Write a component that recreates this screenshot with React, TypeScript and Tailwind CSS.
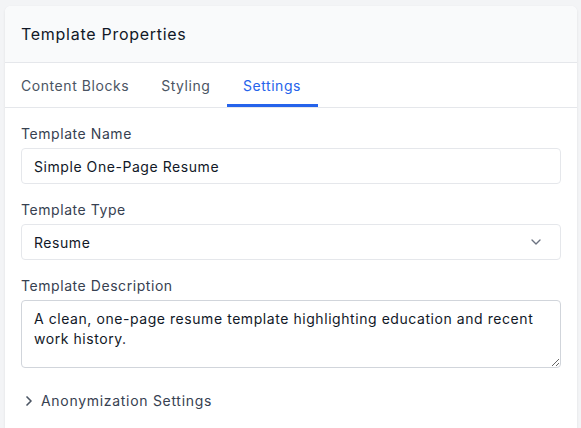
import React from "react";

export default function App() {
  const font = { fontFamily: "Inter, 'Noto Sans', sans-serif" };
  return (
    <div className="min-h-[428px] w-[581px] bg-[#f3f4f6] pt-[6px] pl-[5px]" style={font}>
      <div className="w-[572px] h-[422px] rounded-t-md bg-white shadow-[0_1px_3px_rgba(0,0,0,0.08)] overflow-hidden">
        <div className="bg-[#f9fafb] border-b border-[#e5e7eb] px-4 h-[57px] flex items-center">
          <h2 className="text-[16px] font-normal text-[#111827] tracking-[0.045em]">Template Properties</h2>
        </div>
        <div className="flex border-b border-[#e5e7eb] h-[45px]">
          <button className="px-4 text-[14px] text-[#4b5563] tracking-[0.04em] border-b-[3px] border-transparent pt-[3px]">Content Blocks</button>
          <button className="px-4 text-[14px] text-[#4b5563] tracking-[0.04em] border-b-[3px] border-transparent pt-[3px]">Styling</button>
          <button className="px-4 text-[14px] text-[#2563eb] tracking-[0.04em] border-b-[3px] border-[#2563eb] pt-[3px] w-[91px]">Settings</button>
        </div>
        <div className="px-4 pt-4">
          <div className="mb-4">
            <label className="block text-[14px] leading-5 text-[#374151] mb-1 tracking-[0.04em]">Template Name</label>
            <input
              className="w-full h-9 px-3 border border-[#e5e7eb] rounded text-[14px] text-[#111827] tracking-[0.04em] outline-none"
              defaultValue="Simple One-Page Resume"
              style={font}
            />
          </div>
          <div className="mb-4">
            <label className="block text-[14px] leading-5 text-[#374151] mb-1 tracking-[0.04em]">Template Type</label>
            <div className="relative w-full h-9 px-3 border border-[#e5e7eb] rounded flex items-center justify-between">
              <span className="text-[14px] text-[#111827] tracking-[0.04em]">Resume</span>
              <svg width="16" height="16" viewBox="0 0 24 24" fill="none" stroke="#6b7280" strokeWidth="2" strokeLinecap="round" strokeLinejoin="round" className="mr-[4px]">
                <path d="m6 9 6 6 6-6" />
              </svg>
            </div>
          </div>
          <div className="mb-4">
            <label className="block text-[14px] leading-5 text-[#374151] mb-1 tracking-[0.04em]">Template Description</label>
            <textarea
              className="block w-full h-[68px] px-3 py-2 border border-[#d1d5db] rounded-sm text-[14px] leading-5 text-[#111827] tracking-[0.04em] outline-none"
              style={font}
              defaultValue="A clean, one-page resume template highlighting education and recent work history."
            />
          </div>
          <button className="flex items-center gap-[4px] pt-[7px] pb-2 text-[14px] leading-5 text-[#374151] tracking-[0.05em]">
            <svg width="16" height="16" viewBox="0 0 24 24" fill="none" stroke="#4b5563" strokeWidth="2.5" strokeLinecap="round" strokeLinejoin="round">
              <path d="m9 18 6-6-6-6" />
            </svg>
            Anonymization Settings
          </button>
        </div>
      </div>
    </div>
  );
}
